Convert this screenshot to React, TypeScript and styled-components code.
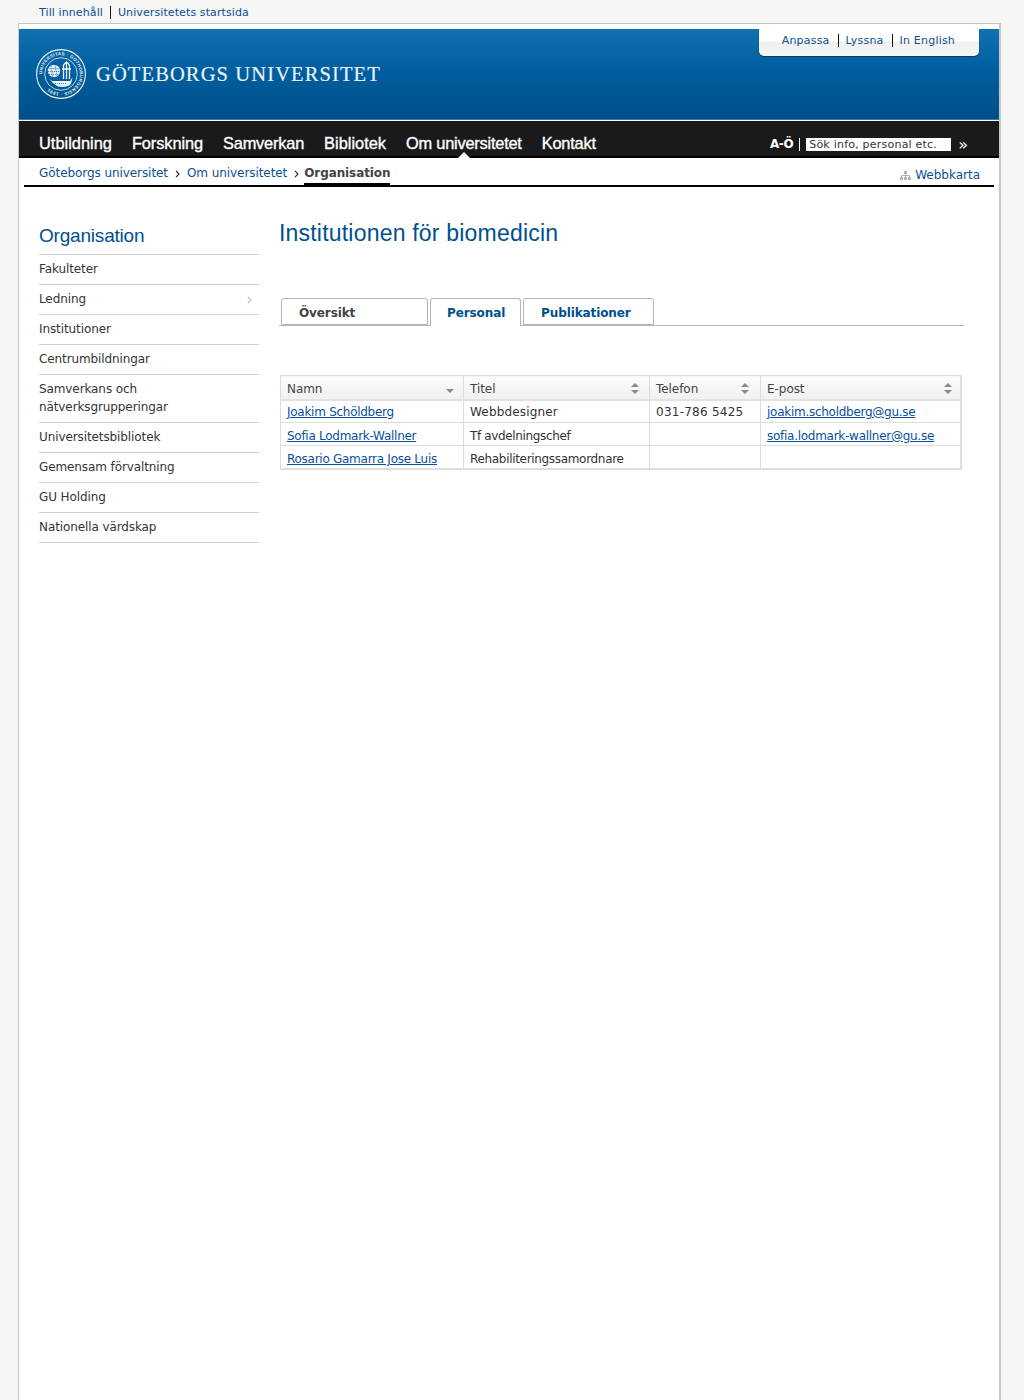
import React from "react";
import styled, { createGlobalStyle } from "styled-components";

const GlobalStyle = createGlobalStyle`
  html, body { margin: 0; padding: 0; height: 1400px; overflow: hidden; background: #f6f6f4; }
  body { font-family: "DejaVu Sans", Verdana, sans-serif; color: #333; }
  a { color: #0a4f96; text-decoration: none; }
`;

const Skip = styled.div`
  display: flex; align-items: center; height: 23px; padding: 1px 0 0 39px; box-sizing: border-box;
  font-size: 11px;
`;
const SepLink = styled.a<{ $first?: boolean }>`
  line-height: 13px; letter-spacing: 0.1px;
  ${(p) => (p.$first ? "padding-right: 7px; border-right: 1px solid #111; margin-right: 7px;" : "")}
`;
const Frame = styled.div`
  margin-left: 18px; width: 983px; height: 1377px; box-sizing: border-box; background: #fff;
  border-top: 1px solid #c4c4c4; border-left: 1px solid #c8c8c8; border-right: 2px solid #c8c8c8;
  padding-top: 5px;
`;
const Banner = styled.header`
  height: 91px; box-sizing: border-box; display: flex; justify-content: space-between; align-items: flex-start;
  padding: 0 20px 0 17px;
  background: linear-gradient(#1170b0, #005fa0 45%, #004f87);
  border-bottom: 1px solid #2d7dbb;
`;
const Brand = styled.div`
  display: flex; align-items: center; gap: 10px; margin-top: 20px;
`;
const BrandName = styled.div`
  font-family: "Liberation Serif", "Times New Roman", serif; font-size: 20.5px; letter-spacing: 1.12px; color: #e9f0f6; white-space: nowrap;
  -webkit-text-stroke: 0.2px #e9f0f6;
`;
const Utility = styled.nav`
  width: 220px; height: 27px; box-sizing: border-box; display: flex; justify-content: flex-end; align-items: center;
  padding: 0 24px 4px 0; font-size: 11px;
  background: linear-gradient(#fff 0, #fff 12px, #f0f0f0 13px, #f4f4f4 100%);
  border-radius: 0 0 5px 5px; box-shadow: 0 1px 1px #08365f;
`;
const UtilityLink = styled.a<{ $sep?: boolean }>`
  line-height: 13px; letter-spacing: 0.2px;
  ${(p) => (p.$sep ? "padding-right: 8px; margin-right: 7px; border-right: 1px solid #111;" : "")}
`;
const MainNav = styled.nav`
  height: 37px; box-sizing: border-box; margin-top: 1px; background: #1a1a1a; border-bottom: 2px solid #000;
  display: flex; justify-content: space-between; align-items: flex-end; padding: 0 31px 3px 20px;
`;
const NavList = styled.div`
  display: flex; gap: 20px;
`;
const NavItem = styled.a<{ $active?: boolean; $sp: number }>`
  position: relative; color: #fff; font-family: "Liberation Sans", Arial, sans-serif; font-size: 16.4px; line-height: 20px;
  letter-spacing: ${(p) => p.$sp}px; -webkit-text-stroke: 0.35px #fff; white-space: nowrap;
  ${(p) =>
    p.$active
      ? `&::after { content: ""; position: absolute; left: 50%; margin-left: -6px; bottom: -5px; border: 6px solid transparent; border-top: 0; border-bottom-color: #fff; }`
      : ""}
`;
const SearchArea = styled.div`
  display: flex; align-items: center; margin-bottom: 2px;
`;
const AZ = styled.a`
  color: #fff; font-size: 12px; font-weight: 700; line-height: 13px; padding-right: 6px; margin-right: 6px; border-right: 1px solid #fff; letter-spacing: -0.4px;
`;
const SearchBox = styled.div`
  width: 145px; height: 13px; background: #fff; color: #333; font-size: 11px; line-height: 14px; padding-left: 3px; box-sizing: border-box; letter-spacing: 0.02em; white-space: nowrap; overflow: hidden;
`;
const Go = styled.span`
  color: #fff; font-size: 16px; margin-left: 7px; line-height: 13px; margin-top: 1px;
`;
const Crumbs = styled.div`
  margin: 0 5px 0 5px; height: 29px; box-sizing: border-box; border-bottom: 2px solid #000;
  display: flex; justify-content: space-between; align-items: flex-start; padding: 0 14px 0 15px;
`;
const CrumbTrail = styled.div`
  display: flex; align-items: flex-start; font-size: 12px; height: 27px; letter-spacing: -0.07px;
`;
const CrumbLink = styled.a`
  line-height: 15px; margin-top: 8px;
`;
const CrumbSep = styled.span`
  width: 19px; height: 15px; margin-top: 8px; display: flex; align-items: center; justify-content: center;
  svg { display: block; margin-top: 1px; }
`;
const CrumbCurrent = styled.span`
  font-weight: 700; color: #444; line-height: 15px; padding: 8px 0 2px; border-bottom: 2px solid #000; height: 15px; margin-left: -2px; letter-spacing: -0.1px;
`;
const SiteMap = styled.a`
  display: flex; align-items: center; gap: 4px; font-size: 12px; margin-top: 10px; line-height: 15px;
`;
const Body = styled.div`
  display: grid; grid-template-columns: 220px 1fr; column-gap: 20px; padding: 0 0 0 20px;
`;
const Side = styled.aside`
  padding-top: 37px;
`;
const SideTitle = styled.div`
  font-family: "Liberation Sans", Arial, sans-serif; font-size: 19px; line-height: 24px; color: #00508f; padding-bottom: 6px; border-bottom: 1px solid #d0d0d0; letter-spacing: -0.2px;
`;
const SideItem = styled.div`
  position: relative; font-size: 12px; line-height: 18px; color: #333; padding: 5px 0 6px; border-bottom: 1px solid #d0d0d0; letter-spacing: -0.1px;
  svg { position: absolute; right: 7px; top: 11px; }
`;
const Content = styled.main`
  padding-top: 33px; width: 685px;
`;
const Title = styled.h1`
  margin: 0; font-family: "Liberation Sans", Arial, sans-serif; font-weight: 400; font-size: 23px; line-height: 26px; color: #00508f; letter-spacing: 0.2px;
`;
const Tabs = styled.div`
  display: flex; gap: 2px; margin-top: 52px; padding-left: 2px; border-bottom: 1px solid #b4b4b4; height: 27px;
`;
const Tab = styled.a<{ $w: number; $active?: boolean; $dark?: boolean }>`
  width: ${(p) => p.$w}px; height: ${(p) => (p.$active ? 28 : 27)}px; box-sizing: border-box; padding-left: ${(p) => (p.$active ? 16 : 17)}px;
  border: 1px solid #b4b4b4; border-bottom: ${(p) => (p.$active ? "0" : "1px solid #b4b4b4")}; border-radius: 3px 3px 0 0; background: #fff;
  font-size: 12px; font-weight: 700; line-height: 28px; letter-spacing: -0.1px;
  color: ${(p) => (p.$dark ? "#444" : "#00508f")};
`;
const Table = styled.table`
  border-collapse: collapse; table-layout: fixed; width: 680px; margin: 49px 0 0 1px; font-size: 12px; border: 1px solid #ddd; border-bottom-width: 2px; border-right-width: 2px;
`;
const Th = styled.th<{ $w: number; $r?: number }>`
  position: relative; width: ${(p) => p.$w}px; height: 24px; padding: 4px 6px 0; box-sizing: border-box; text-align: left; font-weight: 400; color: #444; letter-spacing: -0.05px;
  border: 1px solid #ddd; border-bottom: 2px solid #e2e2e2; background: linear-gradient(#fbfbfb, #f1f1f1);
  svg { position: absolute; right: ${(p) => p.$r ?? 9}px; top: 7px; }
`;
const Td = styled.td<{ $pt: number }>`
  height: 23px; padding: ${(p) => p.$pt}px 6px 0; box-sizing: border-box; color: #333; border: 1px solid #ddd; white-space: nowrap; overflow: hidden;
`;
const Fitted = styled.span<{ $sp: number }>`
  letter-spacing: ${(p) => p.$sp}px;
`;
const PersonLink = styled.a`
  text-decoration: underline; color: #0a4f9a; letter-spacing: -0.27px;
`;

const Seal = () => (
  <svg width="50" height="50" viewBox="0 0 50 50" aria-hidden="true">
    <defs>
      <path id="ring" d="M25 25 m-18.800 0 a18.800 18.800 0 1 1 37.600 0 a18.800 18.800 0 1 1 -37.600 0" />
    </defs>
    <circle cx="25" cy="25" r="24.400" fill="none" stroke="#eef4f8" strokeWidth="1.100" />
    <circle cx="25" cy="25" r="16.300" fill="none" stroke="#eef4f8" strokeWidth="0.8" />
    <text fontSize="4.400" fontWeight="700" fill="#eef4f8" fontFamily="Liberation Sans, sans-serif" letterSpacing="0.35">
      <textPath href="#ring">UNIVERSITAS · GOTHOBURGENSIS · 1891</textPath>
    </text>
    <circle cx="18" cy="22" r="6.200" fill="#e3ecf3" />
    <path d="M12.500 19.500h11M12 22.500h12M13 25.500h10M15 16.500l1.500 11M19 16l2 11" stroke="#1d659d" strokeWidth="0.7" fill="none" strokeDasharray="1.200 0.800" />
    <path d="M27.500 16v14M30.500 13v17M33.500 16v14M26 20h9M27.500 16l3-3 3 3" stroke="#eef4f8" strokeWidth="1.300" fill="none" />
    <path d="M13 29.500l3 2.500h18l2.500-3.500-1.500 6.500c-2 2-5 3-9 3-5 0-9-3.500-13-8.500z" fill="#eef4f8" />
    <path d="M19 34.500h11" stroke="#0b5c99" strokeWidth="0.7" strokeDasharray="1 1" fill="none" />
  </svg>
);
const Chevron = ({ color = "#222" }: { color?: string }) => (
  <svg width="5" height="8" viewBox="0 0 5 8" aria-hidden="true">
    <path d="M1 .8 4 4 1 7.200" fill="none" stroke={color} strokeWidth="1.100" />
  </svg>
);
const SiteMapIcon = () => (
  <svg width="11" height="9" viewBox="0 0 11 9" aria-hidden="true">
    <path d="M4 0h3v3H4zM0 6h3v3H0zM4 6h3v3H4zM8 6h3v3H8z" fill="#b4b4b4" />
    <path d="M5.500 3v3M1.500 6V4.500h8V6" stroke="#b4b4b4" fill="none" />
  </svg>
);
const SortIcon = () => (
  <svg width="8" height="11" viewBox="0 0 8 11" aria-hidden="true">
    <path d="M4 0 8 4H0zM0 7h8l-4 4z" fill="#8a8a8a" />
  </svg>
);
const SortDown = styled.svg`
  && { top: 13px; right: 9px; }
`;

const navItems = [
  { label: "Utbildning", sp: 0 },
  { label: "Forskning", sp: -0.1 },
  { label: "Samverkan", sp: -0.2 },
  { label: "Bibliotek", sp: 0 },
  { label: "Om universitetet", sp: -0.23 },
  { label: "Kontakt", sp: -0.2 },
];
const sideItems = [
  "Fakulteter",
  "Ledning",
  "Institutioner",
  "Centrumbildningar",
  "Samverkans och nätverksgrupperingar",
  "Universitetsbibliotek",
  "Gemensam förvaltning",
  "GU Holding",
  "Nationella värdskap",
];
const people = [
  { name: "Joakim Schöldberg", title: "Webbdesigner", sp: 0.17, pt: 1, phone: "031-786 5425", mail: "joakim.scholdberg@gu.se" },
  { name: "Sofia Lodmark-Wallner", title: "Tf avdelningschef", sp: -0.35, pt: 3, phone: "", mail: "sofia.lodmark-wallner@gu.se" },
  { name: "Rosario Gamarra Jose Luis", title: "Rehabiliteringssamordnare", sp: -0.32, pt: 5, phone: "", mail: "" },
];

export default function App() {
  return (
    <>
      <GlobalStyle />
      <Skip>
        <SepLink $first href="#">Till innehåll</SepLink>
        <SepLink href="#">Universitetets startsida</SepLink>
      </Skip>
      <Frame>
        <Banner>
          <Brand>
            <Seal />
            <BrandName>GÖTEBORGS UNIVERSITET</BrandName>
          </Brand>
          <Utility>
            <UtilityLink $sep href="#">Anpassa</UtilityLink>
            <UtilityLink $sep href="#">Lyssna</UtilityLink>
            <UtilityLink href="#">In English</UtilityLink>
          </Utility>
        </Banner>
        <MainNav>
          <NavList>
            {navItems.map((n) => (
              <NavItem key={n.label} href="#" $sp={n.sp} $active={n.label === "Om universitetet"}>{n.label}</NavItem>
            ))}
          </NavList>
          <SearchArea>
            <AZ href="#">A-Ö</AZ>
            <SearchBox>Sök info, personal etc.</SearchBox>
            <Go>»</Go>
          </SearchArea>
        </MainNav>
        <Crumbs>
          <CrumbTrail>
            <CrumbLink href="#">Göteborgs universitet</CrumbLink>
            <CrumbSep><Chevron /></CrumbSep>
            <CrumbLink href="#">Om universitetet</CrumbLink>
            <CrumbSep><Chevron /></CrumbSep>
            <CrumbCurrent>Organisation</CrumbCurrent>
          </CrumbTrail>
          <SiteMap href="#"><SiteMapIcon />Webbkarta</SiteMap>
        </Crumbs>
        <Body>
          <Side>
            <SideTitle>Organisation</SideTitle>
            {sideItems.map((s) => (
              <SideItem key={s}>
                {s}
                {s === "Ledning" && <Chevron color="#bbb" />}
              </SideItem>
            ))}
          </Side>
          <Content>
            <Title>Institutionen för biomedicin</Title>
            <Tabs>
              <Tab $w={147} $dark href="#">Översikt</Tab>
              <Tab $w={91} $active href="#">Personal</Tab>
              <Tab $w={131} href="#">Publikationer</Tab>
            </Tabs>
            <Table>
              <thead>
                <tr>
                  <Th $w={183}>
                    Namn
                    <SortDown width="8" height="4" viewBox="0 0 8 4" aria-hidden="true"><path d="M0 0h8L4 4z" fill="#8a8a8a" /></SortDown>
                  </Th>
                  <Th $w={186} $r={10}>Titel<SortIcon /></Th>
                  <Th $w={111} $r={11}>Telefon<SortIcon /></Th>
                  <Th $w={200} $r={8}>E-post<SortIcon /></Th>
                </tr>
              </thead>
              <tbody>
                {people.map((p) => (
                  <tr key={p.name}>
                    <Td $pt={p.pt}><PersonLink href="#">{p.name}</PersonLink></Td>
                    <Td $pt={p.pt}><Fitted $sp={p.sp}>{p.title}</Fitted></Td>
                    <Td $pt={p.pt}><Fitted $sp={0.25}>{p.phone}</Fitted></Td>
                    <Td $pt={p.pt}>{p.mail && <PersonLink href="#">{p.mail}</PersonLink>}</Td>
                  </tr>
                ))}
              </tbody>
            </Table>
          </Content>
        </Body>
      </Frame>
    </>
  );
}
